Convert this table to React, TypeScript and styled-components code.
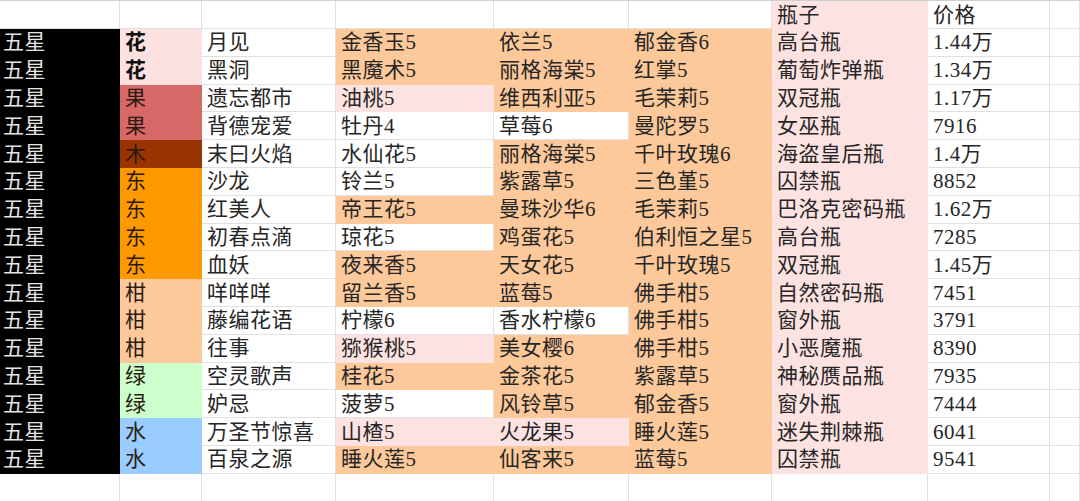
import styled, { createGlobalStyle } from "styled-components";

type Fill = "o" | "p" | "w";

const fills: Record<Fill, string> = {
  o: "#fdc99a",
  p: "#fde2e2",
  w: "#ffffff",
};

const catColors: Record<string, string> = {
  花: "#fde1e1",
  果: "#d86767",
  木: "#993300",
  东: "#ff9900",
  柑: "#fdc99a",
  绿: "#ccffcc",
  水: "#99ccff",
};

const GRID = "#e0e0e0";

type Row = {
  cat: string;
  name: string;
  items: [string, Fill][];
  bottle: string;
  price: string;
};

const rows: Row[] = [
  { cat: "花", name: "月见", items: [["金香玉5", "o"], ["依兰5", "o"], ["郁金香6", "o"]], bottle: "高台瓶", price: "1.44万" },
  { cat: "花", name: "黑洞", items: [["黑魔术5", "o"], ["丽格海棠5", "o"], ["红掌5", "o"]], bottle: "葡萄炸弹瓶", price: "1.34万" },
  { cat: "果", name: "遗忘都市", items: [["油桃5", "p"], ["维西利亚5", "o"], ["毛茉莉5", "o"]], bottle: "双冠瓶", price: "1.17万" },
  { cat: "果", name: "背德宠爱", items: [["牡丹4", "w"], ["草莓6", "w"], ["曼陀罗5", "o"]], bottle: "女巫瓶", price: "7916" },
  { cat: "木", name: "末曰火焰", items: [["水仙花5", "w"], ["丽格海棠5", "o"], ["千叶玫瑰6", "o"]], bottle: "海盗皇后瓶", price: "1.4万" },
  { cat: "东", name: "沙龙", items: [["铃兰5", "w"], ["紫露草5", "o"], ["三色堇5", "o"]], bottle: "囚禁瓶", price: "8852" },
  { cat: "东", name: "红美人", items: [["帝王花5", "o"], ["曼珠沙华6", "o"], ["毛茉莉5", "o"]], bottle: "巴洛克密码瓶", price: "1.62万" },
  { cat: "东", name: "初春点滴", items: [["琼花5", "w"], ["鸡蛋花5", "o"], ["伯利恒之星5", "o"]], bottle: "高台瓶", price: "7285" },
  { cat: "东", name: "血妖", items: [["夜来香5", "o"], ["天女花5", "o"], ["千叶玫瑰5", "o"]], bottle: "双冠瓶", price: "1.45万" },
  { cat: "柑", name: "咩咩咩", items: [["留兰香5", "o"], ["蓝莓5", "o"], ["佛手柑5", "o"]], bottle: "自然密码瓶", price: "7451" },
  { cat: "柑", name: "藤编花语", items: [["柠檬6", "w"], ["香水柠檬6", "w"], ["佛手柑5", "o"]], bottle: "窗外瓶", price: "3791" },
  { cat: "柑", name: "往事", items: [["猕猴桃5", "p"], ["美女樱6", "o"], ["佛手柑5", "o"]], bottle: "小恶魔瓶", price: "8390" },
  { cat: "绿", name: "空灵歌声", items: [["桂花5", "o"], ["金茶花5", "o"], ["紫露草5", "o"]], bottle: "神秘赝品瓶", price: "7935" },
  { cat: "绿", name: "妒忌", items: [["菠萝5", "w"], ["风铃草5", "o"], ["郁金香5", "o"]], bottle: "窗外瓶", price: "7444" },
  { cat: "水", name: "万圣节惊喜", items: [["山楂5", "p"], ["火龙果5", "p"], ["睡火莲5", "o"]], bottle: "迷失荆棘瓶", price: "6041" },
  { cat: "水", name: "百泉之源", items: [["睡火莲5", "o"], ["仙客来5", "o"], ["蓝莓5", "o"]], bottle: "囚禁瓶", price: "9541" },
];

const GlobalStyle = createGlobalStyle`
  html, body {
    margin: 0;
    padding: 0;
    background: #fff;
    overflow: hidden;
  }
`;

const Sheet = styled.div`
  display: grid;
  grid-template-columns: 120px 82px 134px 158px 135px 143px 156px 122px 1fr;
  grid-template-rows: 28px;
  grid-auto-rows: 27.8px;
  width: 1080px;
  height: 501px;
  overflow: hidden;
  border-top: 1px solid #cfcfcf;
  box-sizing: border-box;
  font-family: "Liberation Serif", "Noto Sans CJK SC", serif;
  font-size: 21px;
  letter-spacing: 0.5px;
  color: #262626;
`;

const Cell = styled.div<{ $bg?: string; $ink?: string; $bold?: boolean; $pad?: number }>`
  display: flex;
  align-items: center;
  box-sizing: border-box;
  padding: 1px 0 0 ${(p) => p.$pad ?? 5}px;
  background: ${(p) => p.$bg ?? "#fff"};
  border-right: 1px solid ${(p) => (p.$bg && p.$bg !== "#ffffff" ? p.$bg : GRID)};
  border-bottom: 1px solid ${(p) => (p.$bg && p.$bg !== "#ffffff" ? p.$bg : GRID)};
  color: ${(p) => p.$ink ?? "inherit"};
  font-weight: ${(p) => (p.$bold ? 700 : 400)};
  white-space: nowrap;
  overflow: hidden;
  line-height: 1;
`;

const StarCell = styled(Cell).attrs({ $bg: "#000000", $ink: "#e4e4e4", $pad: 3 })``;

const App = () => {
  return (
    <>
      <GlobalStyle />
      <Sheet>
        <Cell />
        <Cell />
        <Cell />
        <Cell />
        <Cell />
        <Cell />
        <Cell $bg={fills.p}>瓶子</Cell>
        <Cell>价格</Cell>
        <Cell />

        {rows.map((r, i) => (
          <>
            <StarCell key={`a${i}`}>五星</StarCell>
            <Cell key={`b${i}`} $bg={catColors[r.cat]} $bold={r.cat === "花"} $ink={r.cat === "花" ? "#111" : "#2a1a10"}>
              {r.cat}
            </Cell>
            <Cell key={`c${i}`}>{r.name}</Cell>
            {r.items.map(([t, f], j) => (
              <Cell key={`d${i}${j}`} $bg={fills[f]}>
                {t}
              </Cell>
            ))}
            <Cell key={`g${i}`} $bg={fills.p}>{r.bottle}</Cell>
            <Cell key={`h${i}`}>{r.price}</Cell>
            <Cell key={`i${i}`} />
          </>
        ))}

        {Array.from({ length: 9 }).map((_, k) => (
          <Cell key={`e${k}`} />
        ))}

        <Cell $bg="#3a3a3a" />
        <Cell />
        <Cell />
        <Cell $bg={fills.o} />
        <Cell $bg={fills.o} />
        <Cell $bg={fills.o} />
        <Cell $bg={fills.p} />
        <Cell />
        <Cell />
      </Sheet>
    </>
  );
};

export default App;
